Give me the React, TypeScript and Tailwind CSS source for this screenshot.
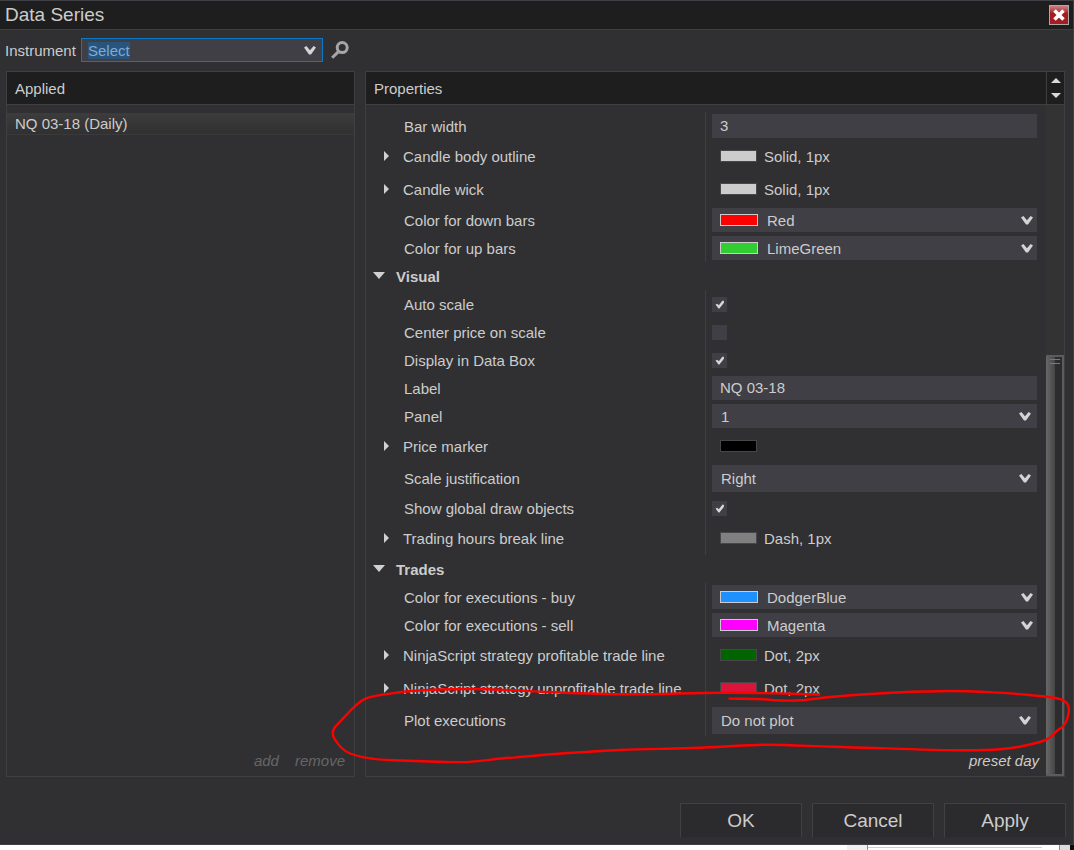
import { useState, type ReactNode } from "react";

type Row =
  | { kind: "text"; id: string; label: string; value: string }
  | { kind: "check"; id: string; label: string; checked: boolean }
  | { kind: "select"; id: string; label: string; options: string[]; tall?: boolean }
  | { kind: "color"; id: string; label: string; options: string[]; swatch: string }
  | { kind: "stroke"; id: string; label: string; swatch: string; value?: string };

type Group = { title?: string; rows: Row[] };

const groups: Group[] = [
  {
    rows: [
      { kind: "text", id: "bar-width", label: "Bar width", value: "3" },
      { kind: "stroke", id: "candle-outline", label: "Candle body outline", swatch: "bg-[#cccccc]", value: "Solid, 1px" },
      { kind: "stroke", id: "candle-wick", label: "Candle wick", swatch: "bg-[#cccccc]", value: "Solid, 1px" },
      { kind: "color", id: "down-bars", label: "Color for down bars", options: ["Red"], swatch: "bg-[#ff0000]" },
      { kind: "color", id: "up-bars", label: "Color for up bars", options: ["LimeGreen"], swatch: "bg-[#32cd32]" },
    ],
  },
  {
    title: "Visual",
    rows: [
      { kind: "check", id: "auto-scale", label: "Auto scale", checked: true },
      { kind: "check", id: "center-price", label: "Center price on scale", checked: false },
      { kind: "check", id: "data-box", label: "Display in Data Box", checked: true },
      { kind: "text", id: "label", label: "Label", value: "NQ 03-18" },
      { kind: "select", id: "panel", label: "Panel", options: ["1", "2"] },
      { kind: "stroke", id: "price-marker", label: "Price marker", swatch: "bg-black" },
      { kind: "select", id: "scale-just", label: "Scale justification", options: ["Right", "Left", "Overlay"], tall: true },
      { kind: "check", id: "global-draw", label: "Show global draw objects", checked: true },
      { kind: "stroke", id: "break-line", label: "Trading hours break line", swatch: "bg-[#808080]", value: "Dash, 1px" },
    ],
  },
  {
    title: "Trades",
    rows: [
      { kind: "color", id: "exec-buy", label: "Color for executions - buy", options: ["DodgerBlue"], swatch: "bg-[#1e90ff]" },
      { kind: "color", id: "exec-sell", label: "Color for executions - sell", options: ["Magenta"], swatch: "bg-[#ff00ff]" },
      { kind: "stroke", id: "profit-line", label: "NinjaScript strategy profitable trade line", swatch: "bg-[#006400]", value: "Dot, 2px" },
      { kind: "stroke", id: "loss-line", label: "NinjaScript strategy unprofitable trade line", swatch: "bg-[#dc143c]", value: "Dot, 2px" },
      { kind: "select", id: "plot-exec", label: "Plot executions", options: ["Do not plot", "Text and marker", "Marker only"], tall: true },
    ],
  },
];

function Chevron({ className = "" }: { className?: string }) {
  return (
    <svg viewBox="0 0 12 9" className={`h-[9px] w-3 ${className}`} aria-hidden="true">
      <path d="M0 1.6 L2.4 0 L6 4.2 L9.6 0 L12 1.6 L7 8.6 H5 Z" fill="#d4d4d4" />
    </svg>
  );
}

function Field({ row }: { row: Row }) {
  switch (row.kind) {
    case "text":
      return (
        <input
          id={row.id}
          type="text"
          defaultValue={row.value}
          className="h-6 w-full bg-[#3f3f45] px-2 pb-px outline-none"
        />
      );
    case "check":
      return (
        <span className="relative block size-[15px]">
          <input
            id={row.id}
            type="checkbox"
            defaultChecked={row.checked}
            className="peer block size-[15px] appearance-none bg-[#3f3f45]"
          />
          <svg
            viewBox="0 0 15 15"
            className="pointer-events-none absolute inset-0 hidden size-[15px] peer-checked:block"
            aria-hidden="true"
          >
            <path d="M3.6 7.4 L5.2 6.8 L6.8 8.2 L10.6 3.6 L12 4 L11.8 6 L7.4 11.6 H6.4 Z" fill="#d8d8d8" />
          </svg>
        </span>
      );
    case "select":
      return (
        <span className="relative flex w-full items-center">
          <select
            id={row.id}
            className={`w-full appearance-none bg-[#3f3f45] pl-[9px] pr-7 outline-none ${row.tall ? "h-[27px]" : "h-6"}`}
          >
            {row.options.map((o) => (
              <option key={o}>{o}</option>
            ))}
          </select>
          <Chevron className="pointer-events-none absolute right-[6px]" />
        </span>
      );
    case "color":
      return (
        <span className="relative flex w-full items-center">
          <select id={row.id} className="h-6 w-full appearance-none bg-[#3f3f45] pl-[55px] pr-7 outline-none">
            {row.options.map((o) => (
              <option key={o}>{o}</option>
            ))}
          </select>
          <span className={`pointer-events-none absolute left-2 h-3 w-[38px] border border-[#cccccc] ${row.swatch}`} />
          <Chevron className="pointer-events-none absolute right-1" />
        </span>
      );
    case "stroke":
      return (
        <span className="flex items-center gap-[7px] pl-2">
          <span className={`mb-[2px] h-3 w-[37px] border border-[#47474a] ${row.swatch}`} />
          {row.value && <span>{row.value}</span>}
        </span>
      );
  }
}

function PropertyRow({ row }: { row: Row }) {
  let height = "h-7";
  if (row.kind === "stroke") height = "h-[33px]";
  if (row.kind === "select" && row.tall) height = "h-[31px]";

  return (
    <div className={`flex ${height}`}>
      <div className="flex w-[339px] shrink-0 items-center">
        {row.kind === "stroke" ? (
          <button type="button" className="flex items-center gap-[14px] whitespace-nowrap pl-[18px]">
            <svg viewBox="0 0 5 10" className="mb-px h-[10px] w-[5px]" aria-hidden="true">
              <path d="M0 0 L5 5 L0 10 Z" fill="#d0d0d0" />
            </svg>
            {row.label}
          </button>
        ) : (
          <label htmlFor={row.id} className="pl-[38px]">
            {row.label}
          </label>
        )}
      </div>
      <div className="flex min-w-0 flex-1 items-center border-l border-[#3f3f42] pl-[6px]">
        <Field row={row} />
      </div>
    </div>
  );
}

function PropertyGroup({ group }: { group: Group }) {
  const [open, setOpen] = useState(true);

  return (
    <section>
      {group.title && (
        <button
          type="button"
          aria-expanded={open}
          onClick={() => setOpen(!open)}
          className="flex h-7 items-center gap-[11px] pl-[7px] font-bold"
        >
          <svg viewBox="0 0 12 7" className="mb-px h-[7px] w-3" aria-hidden="true">
            <path d="M0 0 H12 L6 7 Z" fill="#d0d0d0" />
          </svg>
          {group.title}
        </button>
      )}
      {open && group.rows.map((row) => <PropertyRow key={row.id} row={row} />)}
    </section>
  );
}

function FooterButton({ children }: { children: ReactNode }) {
  return (
    <button
      type="button"
      className="h-[34px] w-[122px] border border-b-0 border-[#414144] bg-[#2b2b2d] text-[19px]"
    >
      {children}
    </button>
  );
}

function Scrollbar() {
  return (
    <div className="flex w-[18px] shrink-0 flex-col bg-[#333333]">
      <div className="flex-[3]" />
      <div className="flex flex-[5] border-2 border-l-0 border-[#5c5c5e] bg-[#2c2c2e]">
        <div className="w-[9px] shrink-0 bg-linear-to-r from-[#686868] to-[#454545]" />
        <svg viewBox="0 0 10 6" className="-ml-[5px] mt-[2px] h-[6px] w-[10px] shrink-0" aria-hidden="true">
          <path d="M0 0.5 H10 M0 4.5 H10" stroke="#7a7a7a" />
        </svg>
      </div>
    </div>
  );
}

/* Hand-drawn marker line round the "Plot executions" row */
function Markup() {
  return (
    <svg
      viewBox="330 680 744 90"
      className="pointer-events-none absolute left-[330px] top-[680px] h-[90px] w-[744px]"
      fill="none"
      stroke="#ff0000"
      strokeWidth="2.4"
      strokeLinecap="round"
      strokeLinejoin="round"
      aria-hidden="true"
    >
      <path
        d="M819 694.5 C790 694 760 692.5 720 692.7 C690 692.7 660 694.5 620 694.3 C590 694 560 692.5 533 691.4
        C510 690 490 688.8 466 689 C440 689.3 420 690 403 691.7 C388 694 375 695 366 698.3 C361 700.5 357 704 352 709
        L335 727 C332 731 332 734 334 738 C338 745 342 750 350 753.5 C360 757.5 372 759.5 393 760.3
        L437 761.7 C448 762 458 762.3 468 762 C485 760.5 500 758.5 513 757.6 C535 755.5 555 753.7 573 752.7
        C590 751.8 605 750.5 620 750 C650 748.8 680 748.8 704 747.5 C730 746.5 750 744.7 767 744.7
        C790 744.8 812 746.2 833 746.7 C860 747.8 875 748 887 748.4 C920 749.6 945 750.4 967 750.3
        C982 750.2 992 749.8 1000 749.2 C1010 748.3 1017 747.3 1023 746 C1032 744 1040 742.5 1047 739.3
        C1053 736 1055 731.5 1060 728.5 C1064 727 1065.5 723 1067 719.5 C1069 714 1069.3 709 1068 705
        C1066.5 701.5 1064 700 1059 698.8 C1052 696.8 1042 696.2 1033 695.4 C1018 694 1005 692.7 993 692.4
        C975 691.5 965 691 950 691 C925 691 905 692.2 887 693 C867 694 850 695.3 833 696.7 C818 698 810 699.8 800 700.3
        C790 701 780 700.5 772 700 C758 698.3 745 699 729.5 698.6"
      />
    </svg>
  );
}

export default function App() {
  return (
    <div className="relative font-['Liberation_Sans',Arial,sans-serif] text-[15px] leading-[17px] text-[#cccccc]">
      <main className="border-y border-r border-[#3f3f45] bg-[#303032]">
        <header className="flex h-[29px] items-center justify-between border-b border-[#3f3f42] bg-[#1e1e1e] pl-[5px] pr-1">
          <h1 className="pb-[2px] text-[19px]">Data Series</h1>
          <button
            type="button"
            aria-label="Close"
            className="flex size-5 items-center justify-center border border-[#a9a9a9] bg-linear-to-b from-[#c98084] via-[#a51c22] via-40% to-[#a51c22]"
          >
            <svg viewBox="0 0 12 12" className="size-3" aria-hidden="true">
              <path d="M1.5 1.5 L10.5 10.5 M10.5 1.5 L1.5 10.5" stroke="#ffffff" strokeWidth="3.6" />
            </svg>
          </button>
        </header>

        {/* Instrument picker */}
        <div className="flex h-[41px] items-center pb-px pl-[5px]">
          <label htmlFor="instrument" className="w-[76px] pt-px">
            Instrument
          </label>
          <div className="flex h-6 w-[242px] items-center justify-between border border-[#0a78c8] bg-[#3f3f45] px-[6px]">
            <input
              id="instrument"
              type="text"
              defaultValue="Select"
              className="h-[17px] w-[42px] bg-[#28547d] text-[#7fabd3] outline-none"
            />
            <button type="button" aria-label="Show instruments">
              <Chevron />
            </button>
          </div>
          <button type="button" aria-label="Search" className="ml-2">
            <svg viewBox="0 0 18 18" className="size-[18px]" fill="none" stroke="#a6a6a6" aria-hidden="true">
              <circle cx="11.2" cy="6.6" r="5" strokeWidth="3" />
              <path d="M7.4 10.6 L1.2 16.8" strokeWidth="3" />
            </svg>
          </button>
        </div>

        <div className="flex gap-[10px] pl-[6px] pr-2">
          <section className="flex w-[349px] shrink-0 flex-col border border-[#3f3f42]">
            <h2 className="flex h-[33px] items-center border-b border-[#3f3f42] bg-[#1e1e1e] pl-2 pt-px">Applied</h2>
            <ul className="flex-1 pt-2">
              <li className="flex h-[22px] items-center border-b border-[#3a3a3c] bg-linear-to-b from-[#3c3c3d] to-[#313131] pl-2">
                NQ 03-18 (Daily)
              </li>
            </ul>
            <div className="flex justify-end gap-4 pb-[7px] pr-[9px] italic text-[#666668]">
              <button type="button">add</button>
              <button type="button">remove</button>
            </div>
          </section>

          <section className="flex min-w-0 flex-1 flex-col border border-[#3f3f42]">
            <div className="flex h-[33px] border-b border-[#3f3f42] bg-[#1e1e1e]">
              <h2 className="flex flex-1 items-center pl-2 pt-px">Properties</h2>
              <div className="flex w-[18px] flex-col items-center justify-center gap-[10px] border-l border-[#3f3f42]">
                <button type="button" aria-label="Scroll up">
                  <svg viewBox="0 0 10 5" className="block h-[5px] w-[10px]" aria-hidden="true">
                    <path d="M0 5 L5 0 L10 5 Z" fill="#d8d8d8" />
                  </svg>
                </button>
                <button type="button" aria-label="Scroll down">
                  <svg viewBox="0 0 10 5" className="block h-[5px] w-[10px]" aria-hidden="true">
                    <path d="M0 0 H10 L5 5 Z" fill="#d8d8d8" />
                  </svg>
                </button>
              </div>
            </div>
            <div className="flex">
              <div className="min-w-0 flex-1 pr-[9px] pt-[7px]">
                {groups.map((group, i) => (
                  <PropertyGroup key={group.title ?? i} group={group} />
                ))}
                <div className="flex h-10 items-center justify-end pt-2 italic">
                  <a href="#preset" className="-mr-[2px]">
                    preset day
                  </a>
                </div>
              </div>
              <Scrollbar />
            </div>
          </section>
        </div>

        <footer className="flex justify-end gap-[10px] pb-[7px] pr-[7px] pt-[26px]">
          <FooterButton>OK</FooterButton>
          <FooterButton>Cancel</FooterButton>
          <FooterButton>Apply</FooterButton>
        </footer>
      </main>

      {/* Edge of the window behind the dialog */}
      <div className="flex h-[5px] bg-white">
        <div className="flex-1" />
        <div className="w-5 bg-[#f0f0f0]" />
        <div className="w-[175px] border-l border-[#8c8c8c] pt-[2px]">
          <div className="h-px bg-[#cfcfcf]" />
        </div>
        <div className="w-[17px]" />
        <div className="w-[11px] border-l border-[#8c8c8c] bg-[#dcdcdc]" />
        <div className="w-1 bg-[#0c0c14]" />
      </div>

      <Markup />
    </div>
  );
}
